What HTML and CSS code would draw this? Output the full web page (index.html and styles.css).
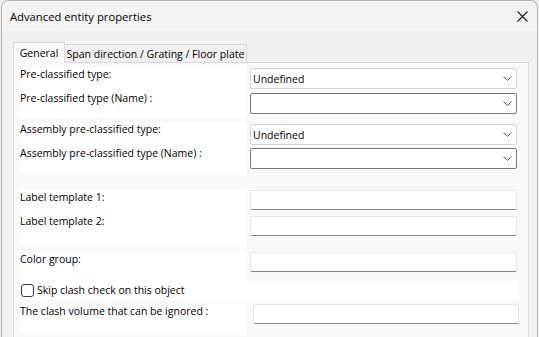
FILE: index.html
```html
<!DOCTYPE html>
<html>
<head>
<meta charset="utf-8">
<link rel="stylesheet" href="styles.css">
</head>
<body>
<div class="window">
  <div class="titlebar">
    <span class="title">Advanced entity properties</span>
    <svg class="close" width="11" height="11" viewBox="0 0 11 11"><path d="M0.5 0.5 L10.5 10.5 M10.5 0.5 L0.5 10.5" stroke="#1a1a1a" stroke-width="1.1" fill="none"/></svg>
  </div>
  <div class="client">
    <div class="tabs">
      <div class="tab active">General</div>
      <div class="tab">Span direction / Grating / Floor plate</div>
    </div>
    <div class="panel">
      <div class="group g1">
        <div class="labels">
          <div class="lbl">Pre-classified type:</div>
          <div class="lbl">Pre-classified type (Name) :</div>
        </div>
        <div class="controls">
          <div class="combo"><span>Undefined</span><svg width="9" height="5" viewBox="0 0 9 5"><path d="M0.5 0.5 L4.5 4.5 L8.5 0.5" stroke="#5a5a5a" fill="none"/></svg></div>
          <div class="combo edit"><span></span><svg width="9" height="5" viewBox="0 0 9 5"><path d="M0.5 0.5 L4.5 4.5 L8.5 0.5" stroke="#5a5a5a" fill="none"/></svg></div>
        </div>
      </div>
      <div class="group g2">
        <div class="labels">
          <div class="lbl">Assembly pre-classified type:</div>
          <div class="lbl">Assembly pre-classified type (Name) :</div>
        </div>
        <div class="controls">
          <div class="combo"><span>Undefined</span><svg width="9" height="5" viewBox="0 0 9 5"><path d="M0.5 0.5 L4.5 4.5 L8.5 0.5" stroke="#5a5a5a" fill="none"/></svg></div>
          <div class="combo edit"><span></span><svg width="9" height="5" viewBox="0 0 9 5"><path d="M0.5 0.5 L4.5 4.5 L8.5 0.5" stroke="#5a5a5a" fill="none"/></svg></div>
        </div>
      </div>
      <div class="group g3">
        <div class="labels">
          <div class="lbl">Label template 1:</div>
          <div class="lbl">Label template 2:</div>
        </div>
        <div class="controls">
          <div class="input"></div>
          <div class="input"></div>
        </div>
      </div>
      <div class="group g4">
        <div class="labels">
          <div class="lbl">Color group:</div>
        </div>
        <div class="controls">
          <div class="input"></div>
        </div>
      </div>
      <div class="check-row">
        <span class="box"></span>
        <span>Skip clash check on this object</span>
      </div>
      <div class="group g5">
        <div class="labels">
          <div class="lbl">The clash volume that can be ignored :</div>
        </div>
        <div class="controls">
          <div class="input"></div>
        </div>
      </div>
    </div>
  </div>
</div>
</body>
</html>
```
FILE: styles.css
```css
* { box-sizing: border-box; }
html, body { margin: 0; padding: 0; }
body {
  background: #ebebeb;
  font-family: "Open Sans", "Noto Sans", sans-serif;
  font-size: 10.5px;
  color: #000;
  height: 337px;
  overflow: hidden;
}
.window {
  margin-left: 1px;
  width: 537px;
  height: 337px;
  border: 1px solid #b4b4b4;
  border-bottom: none;
  border-radius: 8px 8px 0 0;
  overflow: hidden;
  background: #f0f0f0;
  display: flex;
  flex-direction: column;
}
.titlebar {
  height: 30px;
  flex: none;
  background: #f3f3f3;
  display: flex;
  align-items: center;
  justify-content: space-between;
  padding: 1px 9px 0 8px;
}
.title { font-size: 11.25px; }
.client {
  flex: 1;
  min-height: 0;
  padding: 11px 0 0 11px;
  display: flex;
  flex-direction: column;
}
.tabs {
  display: flex;
  align-items: flex-end;
  flex: none;
}
.tab {
  width: 182px;
  height: 18px;
  border: 1px solid #d9d9d9;
  border-left: none;
  border-bottom: none;
  background: #f0f0f0;
  display: flex;
  align-items: center;
  justify-content: center;
  padding-top: 1px;
  white-space: nowrap;
}
.tab.active {
  width: 52px;
  height: 21px;
  border-left: 1px solid #d9d9d9;
  background: #f9f9f9;
  margin-bottom: -1px;
  padding-top: 0;
  position: relative;
  z-index: 1;
}
.panel {
  flex: 1;
  min-height: 0;
  overflow: hidden;
  width: 516px;
  border: 1px solid #d9d9d9;
  border-bottom: none;
  background: #f9f9f9;
  padding: 4px 0 0 6px;
}
.group {
  display: flex;
  gap: 4px;
}
.labels {
  width: 226px;
  background: #fff;
  display: flex;
  flex-direction: column;
}
.lbl {
  height: 24px;
  line-height: 15px;
  white-space: nowrap;
}
.controls {
  width: 267px;
  display: flex;
  flex-direction: column;
}
.g1 .labels, .g2 .labels { height: 51px; }
.g1 .controls { padding-top: 1px; gap: 4px; }
.g2 { margin-top: 4px; }
.g2 .controls { padding-top: 2px; gap: 3px; }
.g3 { margin-top: 17px; }
.g3 .labels { height: 55px; }
.g3 .controls { gap: 6px; }
.g4 { margin-top: 7px; }
.g4 .labels, .g5 .labels { height: 29px; }
.g5 { margin-top: 5px; }
.g5 .controls { margin-left: 3px; width: 266px; }
.combo {
  height: 21px;
  background: #fff;
  border: 1px solid #d3d3d3;
  border-radius: 2px;
  display: flex;
  align-items: center;
  justify-content: space-between;
  padding: 0 4px 0 2px;
}
.combo.edit { border-color: #7a7a7a; }
.input {
  height: 20px;
  background: #fff;
  border: 1px solid #e6e6e6;
  border-bottom-color: #858585;
  border-radius: 2px;
}
.check-row {
  width: 499px;
  height: 18px;
  background: #fff;
  display: flex;
  align-items: center;
  gap: 3px;
  padding-left: 1px;
}
.box {
  width: 13px;
  height: 13px;
  border: 1px solid #3a3a3a;
  border-radius: 3px;
  background: #fff;
  flex: none;
}
```
